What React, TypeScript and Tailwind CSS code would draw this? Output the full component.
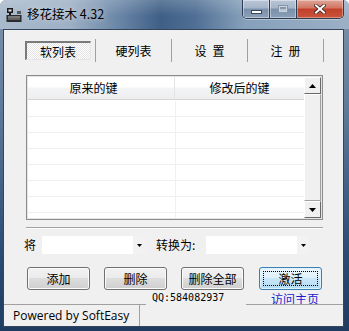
const cjk = "font-['Noto_Sans_CJK_SC',sans-serif]";

function AppIcon() {
  return (
    <svg width="16" height="16" viewBox="0 0 16 16" className="shrink-0">
      <rect x="1" y="1" width="6" height="5" fill="#1a1a1a" />
      <rect x="2.5" y="2.5" width="3" height="2" fill="#e8e8e8" />
      <rect x="3" y="6" width="2" height="2" fill="#1a1a1a" />
      <rect x="0.5" y="8" width="15" height="7" fill="#2a2a2a" />
      <rect x="2" y="9.5" width="12" height="1" fill="#c8c8c8" />
      <rect x="2" y="11.5" width="12" height="1" fill="#9a9a9a" />
      <rect x="11" y="4" width="4" height="3" fill="#5a5a5a" />
    </svg>
  );
}

function CaptionButtons() {
  return (
    <div className="ml-auto mr-[5px] flex h-[19px] rounded-b-[5px] border border-t-0 border-[#2c3d52] overflow-hidden shadow-[0_1px_0_rgba(255,255,255,0.35)]">
      <div className="w-[27px] border-r border-[#2c3d52] flex items-center justify-center bg-[linear-gradient(180deg,#b9c6d6_0%,#a5b5c9_45%,#7a90aa_50%,#8ba0b9_100%)] shadow-[inset_0_0_0_1px_rgba(255,255,255,0.4)]">
        <div className="w-[11px] h-[4px] mt-[5px] bg-white border border-[#38485c]" />
      </div>
      <div className="w-[27px] border-r border-[#2c3d52] flex items-center justify-center bg-[linear-gradient(180deg,#b9c6d6_0%,#a5b5c9_45%,#7a90aa_50%,#8ba0b9_100%)] shadow-[inset_0_0_0_1px_rgba(255,255,255,0.4)]">
        <div className="w-[10px] h-[8px] border border-[#8596ab] bg-[#c9d3df]">
          <div className="m-[1px] h-[4px] border-t-2 border-[#8596ab] bg-[#b7c4d3]" />
        </div>
      </div>
      <div className="w-[46px] flex items-center justify-center bg-[linear-gradient(180deg,#e0a597_0%,#d27461_45%,#c0402a_50%,#c9553c_100%)] shadow-[inset_0_0_0_1px_rgba(255,255,255,0.35)]">
        <svg width="12" height="10" viewBox="0 0 12 10">
          <path d="M2 1.5 L10 8.5 M10 1.5 L2 8.5" stroke="#3a2520" strokeWidth="3.6" strokeLinecap="square" />
          <path d="M2 1.5 L10 8.5 M10 1.5 L2 8.5" stroke="#ffffff" strokeWidth="2" strokeLinecap="square" />
        </svg>
      </div>
    </div>
  );
}

function TitleBar() {
  return (
    <div className="h-[29px] flex items-start bg-[linear-gradient(180deg,rgba(255,255,255,0.18)_0%,rgba(255,255,255,0)_55%),linear-gradient(90deg,#a9bacc_0%,#9db0c5_20%,#6a86a7_34%,#3f5f86_46%,#4f6f94_56%,#86a0bb_70%,#9cb0c5_100%)]">
      <div className="ml-[6px] mt-[7px]">
        <AppIcon />
      </div>
      <div className={`ml-[5px] mt-[6px] text-[12.5px] leading-[16px] text-black ${cjk} [text-shadow:0_0_6px_rgba(255,255,255,0.7)]`}>
        移花接木 4.32
      </div>
      <CaptionButtons />
    </div>
  );
}

function Tabs() {
  const others: string[][] = [["硬列表"], ["设", "置"], ["注", "册"]];
  return (
    <div className="mt-[9px] ml-[16px] flex h-[23px]">
      <div className="w-[76px] flex items-center justify-center border-r border-[#a0a0a0]">
        <div className="w-[66px] h-[19px] flex items-center justify-center border-t-2 border-l-2 border-[#7a7a7a] border-b border-r border-b-[#e6e6e6] border-r-[#e6e6e6] bg-[repeating-conic-gradient(#ffffff_0_25%,#e4e4e4_0_50%)] bg-[length:2px_2px]">
          <span className="leading-[14px] pt-[1px]">软列表</span>
        </div>
      </div>
      {others.map((t) => (
        <div key={t.join("")} className="w-[76px] flex items-center justify-center gap-[6px] border-r border-[#a0a0a0]">
          {t.map((c) => (
            <span key={c}>{c}</span>
          ))}
        </div>
      ))}
    </div>
  );
}

function ScrollBtn({ up }: { up: boolean }) {
  return (
    <div className="h-[17px] flex items-center justify-center bg-[#f0f0f0] border border-t-white border-l-white border-b-[#696969] border-r-[#696969]">
      <svg width="7" height="4" viewBox="0 0 7 4">
        {up ? <path d="M3.5 0 L7 4 L0 4 Z" fill="#000" /> : <path d="M0 0 L7 0 L3.5 4 Z" fill="#000" />}
      </svg>
    </div>
  );
}

function ListView() {
  const rows = Array.from({ length: 8 });
  return (
    <div className="mt-[13px] ml-[22px] w-[297px] h-[145px] border border-[#8c8c8c]">
      <div className="h-full border border-[#e4e4e4] bg-white flex">
        <div className="w-[276px] flex flex-col overflow-hidden">
          <div className="h-[23px] shrink-0 flex border-b border-[#d5d5d5] bg-[linear-gradient(180deg,#ffffff_0%,#ffffff_45%,#f3f4f6_50%,#eceef0_100%)]">
            <div className="w-[147px] pr-[15px] flex items-center justify-center border-r border-[#e2e3e5]">原来的键</div>
            <div className="flex-1 flex items-center justify-center">修改后的键</div>
          </div>
          <div className="pt-[1px]">
            {rows.map((_, i) => (
              <div key={i} className="h-[16px] flex border-b border-[#f0f0f0]">
                <div className="w-[148px] border-r border-[#f0f0f0]" />
                <div className="flex-1" />
              </div>
            ))}
          </div>
        </div>
        <div className="w-[17px] flex flex-col">
          <ScrollBtn up />
          <div className="flex-1 bg-[#f0f0f0] border border-t-white border-l-white border-b-[#a0a0a0] border-r-[#a0a0a0]" />
          <ScrollBtn up={false} />
        </div>
      </div>
    </div>
  );
}

function Combo() {
  return (
    <div className="w-[103px] h-[18px] bg-white flex justify-end">
      <div className="w-[12px] h-full bg-[#f2f2f2] flex items-center justify-center">
        <svg width="5" height="3" viewBox="0 0 5 3">
          <path d="M0 0 L5 0 L2.5 3 Z" fill="#000" />
        </svg>
      </div>
    </div>
  );
}

function Btn({ label, focused }: { label: string; focused?: boolean }) {
  return (
    <div
      className={`relative w-[63px] h-[23px] rounded-[3px] border flex items-center justify-center ${
        focused
          ? "border-[#3c7fb1] bg-[linear-gradient(180deg,#eaf6fd_0%,#dff1fb_49%,#c9e7f8_50%,#b3dcf3_100%)] shadow-[inset_0_0_0_1px_#dff3fd]"
          : "border-[#707070] bg-[linear-gradient(180deg,#f2f2f2_0%,#ebebeb_49%,#dddddd_50%,#cfcfcf_100%)] shadow-[inset_0_0_0_1px_#fbfbfb]"
      }`}
    >
      {focused && <div className="absolute inset-[3px] border border-dotted border-black" />}
      <span className="leading-[14px]">{label}</span>
    </div>
  );
}

export default function App() {
  return (
    <div className={`w-[349px] h-[331px] flex flex-col rounded-t-[6px] overflow-hidden bg-[linear-gradient(180deg,#8094ad_0%,#5c7899_35%,#2d4d75_75%,#1f3b60_100%)] text-[12px] text-black ${cjk}`}>
      <TitleBar />
      <div className="flex-1 pl-[3px] pr-[5px] pb-[4px]">
        <div className="h-full border border-[#34465c] bg-[#f0f0f0] flex flex-col">
          <Tabs />
          <ListView />
          <div className="mt-[7px] ml-[22px] w-[297px] h-[2px] border-t border-[#a0a0a0] border-b border-b-white" />
          <div className="mt-[7px] h-[18px] flex items-center">
            <span className="ml-[20px] w-[18px]">将</span>
            <Combo />
            <span className="ml-[11px] w-[50px]">转换为:</span>
            <Combo />
          </div>
          <div className="mt-[13px] flex">
            <div className="ml-[23px]"><Btn label="添加" /></div>
            <div className="ml-[14px]"><Btn label="删除" /></div>
            <div className="ml-[14px]"><Btn label="删除全部" /></div>
            <div className="ml-[15px]"><Btn label="激活" focused /></div>
          </div>
          <div className="h-[14px] flex items-start">
            <div className="ml-[142px] w-[100px] h-[16px] relative z-10 bg-[#f0f0f0] pl-[6px] pt-[1px] font-['DejaVu_Sans_Mono',monospace] text-[10px] leading-[14px]">
              QQ:584082937
            </div>
            <div className="ml-[25px] mt-[2px] h-[12px] overflow-hidden text-[#1a1acc] leading-[14px]">访问主页</div>
          </div>
          <div className="h-[22px] border-t border-[#a0a0a0] flex">
            <div className="w-[136px] border-r border-[#a0a0a0] pl-[9px] flex items-center font-['Open_Sans',sans-serif] text-[12px]">
              Powered by SoftEasy
            </div>
          </div>
        </div>
      </div>
    </div>
  );
}
